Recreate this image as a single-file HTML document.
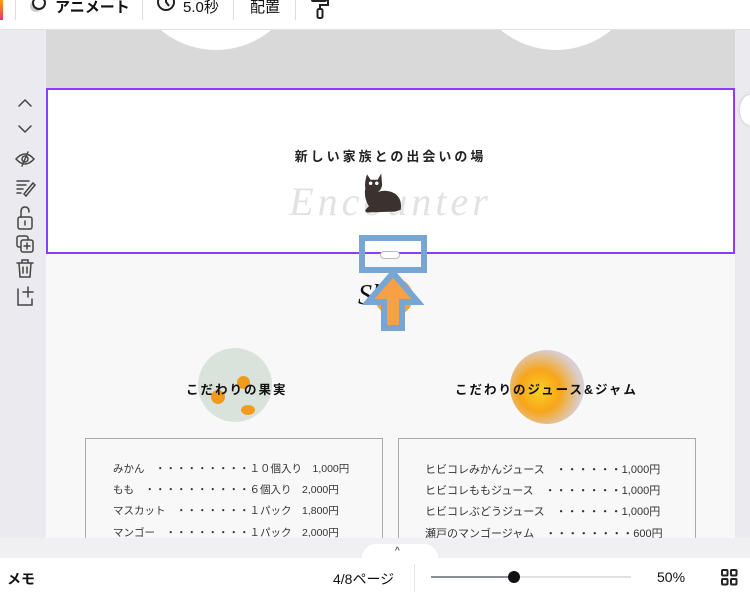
<!DOCTYPE html>
<html><head><meta charset="utf-8"><style>
*{margin:0;padding:0;box-sizing:border-box}
body{width:750px;height:598px;overflow:hidden;position:relative;background:#ebebef;font-family:"Liberation Sans","Noto Sans CJK JP",sans-serif;color:#111}
.abs{position:absolute}
#top{left:0;top:0;width:750px;height:30px;background:#fff;border-bottom:1px solid #e2e2e6;font-size:15px}
.sep{position:absolute;top:0;width:1px;height:20px;background:#ddd}
#canvas{left:46px;top:30px;width:689px;height:508px;background:#f8f8f8;overflow:hidden}
.menu{position:absolute;border:1px solid #aaa;background:#f8f8f8;font-size:10.5px;color:#333}
.menu div{position:absolute;white-space:nowrap}
.ttl{position:absolute;font-size:12.5px;font-weight:bold;letter-spacing:2px;white-space:nowrap}
</style></head><body>
<div id="canvas" class="abs">
 <div class="abs" style="left:0;top:0;width:689px;height:58px;background:#d9d9d9;overflow:hidden">
  <div class="abs" style="left:80px;top:-170px;width:180px;height:190px;border-radius:50%;background:#fff"></div>
  <div class="abs" style="left:420px;top:-170px;width:180px;height:190px;border-radius:50%;background:#fff"></div>
 </div>
 <div class="abs" style="left:0;top:58px;width:689px;height:165px;background:#fff"></div>
 <div class="abs" style="left:0;top:148px;width:689px;text-align:center;font-family:'Liberation Serif',serif;font-style:italic;font-size:40px;color:#e2e2e2;letter-spacing:4px">Encounter</div>
 <div class="abs" style="left:0;top:116px;width:689px;text-align:center;font-size:13px;font-weight:bold;letter-spacing:3px;color:#222">新しい家族との出会いの場</div>
 <svg class="abs" style="left:314px;top:140px" width="46" height="46" viewBox="0 0 52 50"><path d="M8 4 L12 10 L20 10 L24 3 L25 16 Q24 22 20 24 Q30 20 40 26 Q48 32 46 44 L40 46 L8 47 Q4 46 8 42 L10 40 Q4 30 6 20 Q5 12 8 4Z" fill="#3b3230"/><circle cx="12" cy="14" r="2" fill="#fff"/><circle cx="19" cy="14" r="2" fill="#fff"/></svg>
 <div class="abs" style="left:329px;top:248px;width:38px;height:38px;border-radius:50%;background:#f5a13a"></div>
 <div class="abs" style="left:312px;top:250px;font-family:'Liberation Serif',serif;font-style:italic;font-size:28px;color:#111">Shop</div>
 <div class="abs" style="left:152px;top:318px;width:74px;height:74px;border-radius:50%;background:#d9e3dc"></div>
 <div class="abs" style="left:165px;top:360px;width:14px;height:14px;border-radius:50%;background:#f19a1f"></div>
 <div class="abs" style="left:191px;top:346px;width:13px;height:13px;border-radius:50%;background:#f19a1f"></div>
 <div class="abs" style="left:195px;top:375px;width:14px;height:10px;border-radius:50%;background:#f19a1f"></div>
 <div class="ttl" style="left:140px;top:349px">こだわりの果実</div>
 <div class="abs" style="left:464px;top:320px;width:74px;height:74px;border-radius:50%;background:radial-gradient(circle at 40% 55%,#fbd021 0,#f7a51b 35%,#d9cfd3 70%)"></div>
 <div class="ttl" style="left:409px;top:349px">こだわりのジュース&amp;ジャム</div>
 <div class="menu" style="left:39px;top:408px;width:298px;height:120px">
  <div style="left:27px;top:22px">みかん　・・・・・・・・・１０個入り　1,000円</div>
  <div style="left:27px;top:43px">もも　・・・・・・・・・・６個入り　2,000円</div>
  <div style="left:27px;top:64px">マスカット　・・・・・・・１パック　1,800円</div>
  <div style="left:27px;top:86px">マンゴー　・・・・・・・・１パック　2,000円</div>
 </div>
 <div class="menu" style="left:352px;top:408px;width:298px;height:120px;font-size:11px">
  <div style="left:26px;top:22px">ヒビコレみかんジュース　・・・・・・1,000円</div>
  <div style="left:26px;top:43px">ヒビコレももジュース　・・・・・・・1,000円</div>
  <div style="left:26px;top:64px">ヒビコレぶどうジュース　・・・・・・1,000円</div>
  <div style="left:26px;top:86px">瀬戸のマンゴージャム　・・・・・・・・600円</div>
 </div>
</div>
<div class="abs" style="left:46px;top:88px;width:689px;height:166px;border:2px solid #8b3dff"></div>
<div class="abs" style="left:740px;top:95px;width:20px;height:30px;border-radius:50%;background:#fff;box-shadow:0 0 3px #bbb"></div>
<div class="abs" style="left:380px;top:251px;width:20px;height:8px;border-radius:4px;background:#fff;border:1px solid #bbb"></div>
<div class="abs" style="left:359px;top:235px;width:68px;height:38px;border:6px solid #78a6d4"></div>
<svg class="abs" style="left:362px;top:270px" width="62" height="62"><path d="M22 58 L22 32 L6 32 L31 3 L56 32 L40 32 L40 58Z" fill="#f7a045" stroke="#78a6d4" stroke-width="6"/></svg>
<div id="top" class="abs">
 <div class="abs" style="left:0;top:0;width:3px;height:20px;background:linear-gradient(#f5a500,#f0306a)"></div>
 <div class="sep" style="left:15px"></div>
 <svg class="abs" style="left:28px;top:-6px" width="22" height="22"><circle cx="8" cy="12" r="6" fill="#ccc"/><circle cx="11" cy="9" r="6" fill="#fff" stroke="#222" stroke-width="2"/></svg>
 <div class="abs" style="left:55px;top:-4px;font-weight:bold">アニメート</div>
 <div class="sep" style="left:142px"></div>
 <svg class="abs" style="left:155px;top:-7px" width="22" height="22"><circle cx="11" cy="9" r="8" fill="none" stroke="#222" stroke-width="2"/><path d="M11 4 V9 L14 13" fill="none" stroke="#222" stroke-width="2"/></svg>
 <div class="abs" style="left:183px;top:-4px">5.0秒</div>
 <div class="sep" style="left:233px"></div>
 <div class="abs" style="left:250px;top:-4px">配置</div>
 <div class="sep" style="left:295px"></div>
 <svg class="abs" style="left:310px;top:-4px" width="20" height="24"><rect x="2" y="0" width="14" height="5" rx="1" fill="none" stroke="#222" stroke-width="2"/><path d="M16 3 H18 V9 H10 V13" fill="none" stroke="#222" stroke-width="2"/><rect x="7.5" y="13" width="5" height="9" rx="1.5" fill="none" stroke="#222" stroke-width="2"/></svg>
</div>
<svg class="abs" style="left:14px;top:95px" width="22" height="215" fill="none" stroke="#444" stroke-width="1.5" stroke-linecap="round">
 <path d="M5 11 L11 5 L17 11"/>
 <path d="M5 31 L11 37 L17 31"/>
 <path d="M2 64 Q11 54 20 64 Q11 74 2 64Z"/><circle cx="11" cy="64" r="3"/><path d="M14 57 L8 71"/>
 <path d="M3 86 H15 M3 90 H12 M3 94 H9 M3 98 H7 M10 99 L19 88 L21 90 L12 101 Z"/>
 <rect x="4" y="122" width="14" height="12" rx="2"/><path d="M7 122 V117 Q7 112 11 112 Q15 112 15 117"/><path d="M11 126 V130"/>
 <rect x="3" y="141" width="11" height="11" rx="2"/><rect x="7" y="145" width="12" height="12" rx="2" fill="#ebebef"/><path d="M13 148 V154 M10 151 H16"/>
 <path d="M3 168 H19 M8 168 V165 H14 V168 M5 168 L6 182 H16 L17 168 M9 172 V178 M13 172 V178"/>
 <path d="M4 194 V210 H18 V204 M14 192 V202 M9 197 H19"/>
</svg>
<div class="abs" style="left:0;top:538px;width:750px;height:20px;background:#f0f0f2"></div>
<div class="abs" style="left:362px;top:544px;width:76px;height:20px;border-radius:14px 14px 0 0;background:#fff"></div>
<div class="abs" style="left:395px;top:546px;font-size:10px;color:#222">^</div>
<div class="abs" style="left:0;top:558px;width:750px;height:40px;background:#fff;font-size:14px">
 <div class="abs" style="left:7px;top:11px;font-weight:bold">メモ</div>
 <div class="abs" style="left:333px;top:11px">4/8ページ</div>
 <div class="abs" style="left:414px;top:6px;width:1px;height:28px;background:#e6e6e6"></div>
 <div class="abs" style="left:431px;top:18px;width:82px;height:2px;background:#8a8f98"></div>
 <div class="abs" style="left:513px;top:18px;width:118px;height:2px;background:#e2e2e4"></div>
 <div class="abs" style="left:508px;top:13px;width:12px;height:12px;border-radius:50%;background:#111"></div>
 <div class="abs" style="left:657px;top:11px">50%</div>
 <svg class="abs" style="left:721px;top:11px" width="17" height="17" fill="none" stroke="#222" stroke-width="2"><rect x="1" y="1" width="5.5" height="5.5" rx="1"/><rect x="10" y="1" width="5.5" height="5.5" rx="1"/><rect x="1" y="10" width="5.5" height="5.5" rx="1"/><rect x="10" y="10" width="5.5" height="5.5" rx="1"/></svg>
</div>
</body></html>
